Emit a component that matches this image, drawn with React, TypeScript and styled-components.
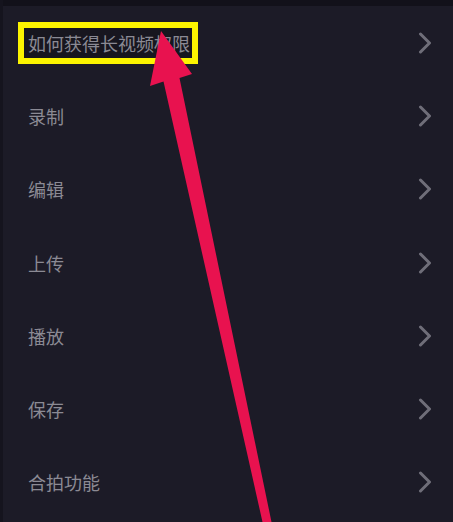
import React from 'react'
import styled, { createGlobalStyle } from 'styled-components'

const GlobalStyle = createGlobalStyle`
  html, body {
    margin: 0;
    padding: 0;
    background: #1c1b27;
  }
  body {
    font-family: "Noto Sans CJK SC", "Noto Sans", sans-serif;
  }
`

const items = ['如何获得长视频权限', '录制', '编辑', '上传', '播放', '保存', '合拍功能']

function App() {
  return (
    <>
      <GlobalStyle />
      <Page>
        <TopBar />
        <List>
          {items.map((label, i) => (
            <Row key={label}>
              {i === 0 ? <Highlight>{label}</Highlight> : <Label>{label}</Label>}
              <Chevron width="14" height="22" viewBox="0 0 14 22">
                <path d="M2.5 2 L11.5 11 L2.5 20" />
              </Chevron>
            </Row>
          ))}
        </List>
        <Arrow width="453" height="522" viewBox="0 0 453 522">
          <polygon points="158,31 189,74 176.5,78 268.5,522 259.5,522 160.5,81.5 147,86" />
        </Arrow>
      </Page>
    </>
  )
}

export default App

const Page = styled.div`
  position: relative;
  width: 453px;
  height: 522px;
  overflow: hidden;
  background: #1c1b27;
  border-left: 3px solid #15141e;
  box-sizing: border-box;
`

const TopBar = styled.div`
  height: 6px;
  background: #12111a;
`

const List = styled.div`
  display: flex;
  flex-direction: column;
  padding-top: 0;
`

const Row = styled.div`
  height: 73.3px;
  display: flex;
  align-items: center;
  justify-content: space-between;
  padding: 0 21px 0 25px;
`

const Label = styled.span`
  font-size: 18px;
  line-height: 24px;
  color: #8b8a94;
`

const Highlight = styled(Label)`
  margin-left: -10px;
  padding: 3px 2px 3px 4px;
  border: 6px solid #fcf400;
  background: #17161f;
`

const Chevron = styled.svg`
  fill: none;
  stroke: #6f6e79;
  stroke-width: 3;
  stroke-linecap: round;
  stroke-linejoin: round;
`

const Arrow = styled.svg`
  position: absolute;
  left: 0;
  top: 0;
  pointer-events: none;
  polygon {
    fill: #e8124f;
  }
`
